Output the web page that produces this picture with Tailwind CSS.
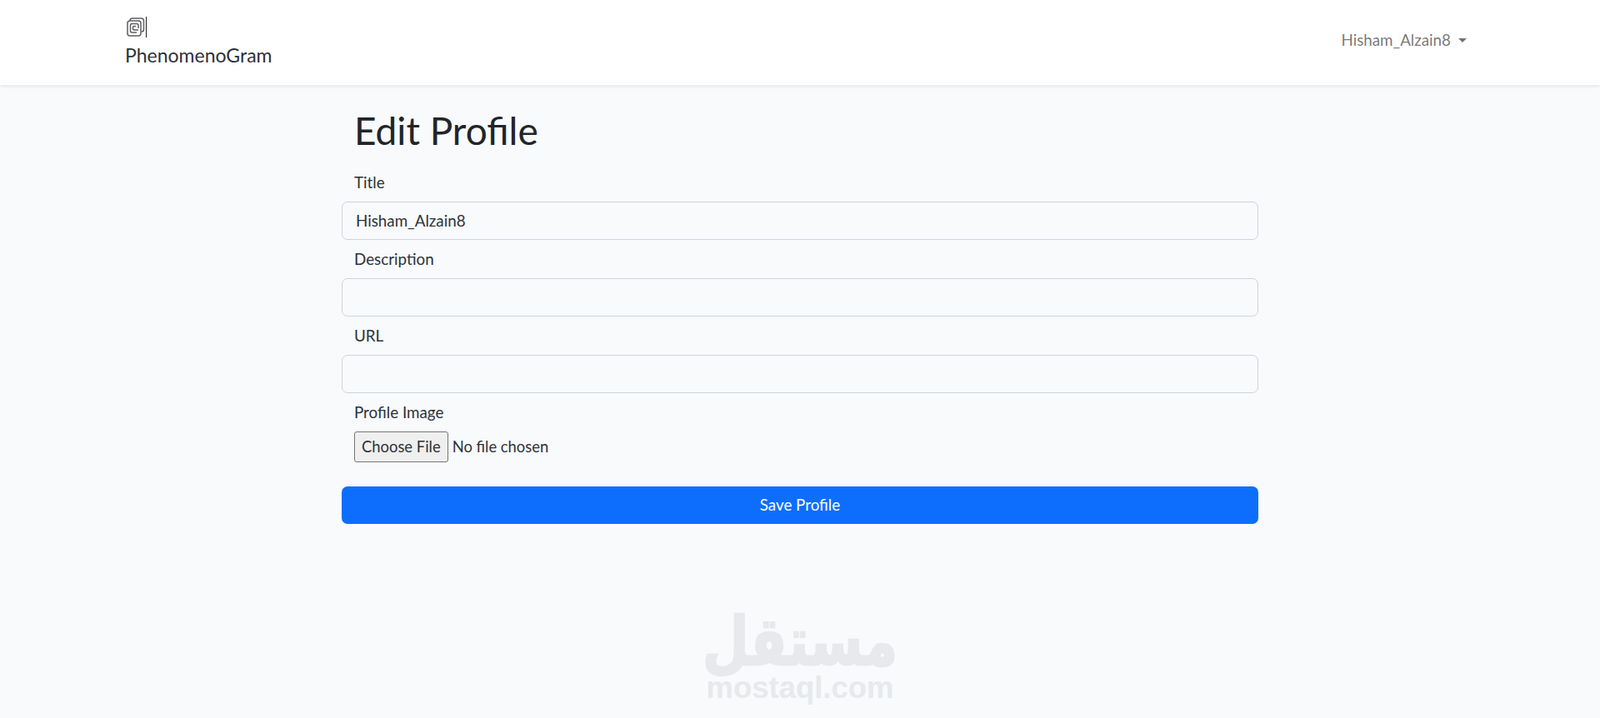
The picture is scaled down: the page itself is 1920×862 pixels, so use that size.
<!DOCTYPE html>
<html lang="en">
<head>
    <meta charset="UTF-8">
    <meta name="viewport" content="width=device-width, initial-scale=1.0">
    <title>Edit Profile</title>
    <script src="https://cdn.jsdelivr.net/npm/@tailwindcss/browser@4"></script>
</head>
<body class="bg-[#f8fafc] text-[#2d3238] font-['Lato','Open_Sans',sans-serif] h-[862px] overflow-hidden flex flex-col">

    <!-- Navbar -->
    <nav class="h-[102px] shrink-0 bg-white shadow-[0_2px_4px_rgba(0,0,0,0.08)] pl-[150px] pr-[160px] flex justify-between">
        <a href="#" class="flex flex-col pt-[20px]">
            <svg class="ml-px" width="26" height="26" viewBox="0 0 26 26" fill="none" stroke="#5f5f63" stroke-width="1.5">
                <path d="M5 4.500 Q5 2 8 2 H18.500 Q21.500 2 21.500 5 V15.500 Q21.500 18 19 18"/>
                <path d="M2 8 Q2 5 5 5 H15 Q18 5 18 8 V20 Q18 23 15 23 H5 Q2 23 2 20 Z"/>
                <path d="M15 14 V10.500 Q15 8.500 13 8.500 H7.500 Q5.500 8.500 5.500 10.500 V17 Q5.500 19 7.500 19 H13"/>
                <path d="M8.500 14.500 V13 Q8.500 11.500 10 11.500 H12 M8.500 14.500 Q8.500 16 10 16 H15"/>
                <path d="M24.500 0 V25" stroke="#222" stroke-width="1"/>
            </svg>
            <span class="text-[23px] leading-[30px] mt-[5px] text-[#2d3238]">PhenomenoGram</span>
        </a>
        <a href="#" class="flex items-center h-[96px] text-[18.800px] text-black/55">
            Hisham_Alzain8
            <span class="ml-[9px] border-t-[5px] border-x-[5px] border-x-transparent border-t-black/55"></span>
        </a>
    </nav>

    <!-- Form -->
    <main class="w-[1100px] ml-[410px] text-[18.800px]">
        <h1 class="text-[46px] leading-[56px] font-normal pl-[15px] mt-[27px] text-[#212529]">Edit Profile</h1>
        <form class="mt-[11px]">
            <label class="block h-[46px] pl-[15px] leading-[46px]">Title</label>
            <input type="text" value="Hisham_Alzain8" class="block w-full h-[46px] px-[16px] pb-[2px] bg-transparent border border-[#ced4da] rounded-[7px]">
            <label class="block h-[46px] pl-[15px] leading-[46px]">Description</label>
            <input type="text" class="block w-full h-[46px] px-[16px] bg-transparent border border-[#ced4da] rounded-[7px]">
            <label class="block h-[46px] pl-[15px] leading-[46px]">URL</label>
            <input type="text" class="block w-full h-[46px] px-[16px] bg-transparent border border-[#ced4da] rounded-[7px]">
            <label class="block h-[46px] pl-[15px] leading-[46px]">Profile Image</label>
            <input type="file" class="block ml-[15px] h-[37px] text-[18.400px] file:h-[37px] file:px-[8px] file:mr-[5px] file:bg-[#efefef] file:border file:border-[#767676] file:rounded-[3px]">
            <button type="button" class="block w-full h-[45px] mt-[29px] bg-[#0d6efd] text-white rounded-[7px]">Save Profile</button>
        </form>
    </main>

    <!-- Watermark -->
    <div class="absolute left-[830px] top-[749px] w-[260px] flex flex-col items-center text-[#e7e9ec] font-bold">
        <span class="h-[58px] text-[64px] leading-[58px] origin-bottom scale-y-125 [-webkit-text-stroke:2px_#e7e9ec] font-['DejaVu_Sans',sans-serif]" lang="ar" dir="rtl">مستقل</span>
        <span class="text-[36.500px] leading-[38px] font-['Liberation_Sans',sans-serif]">mostaql.com</span>
    </div>

</body>
</html>
